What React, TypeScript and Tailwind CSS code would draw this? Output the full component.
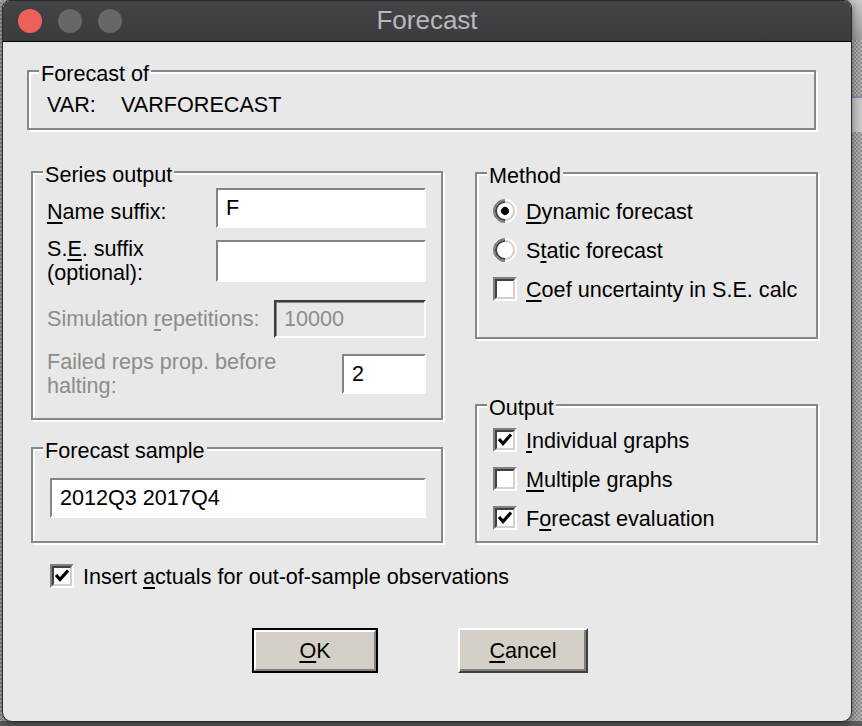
import React from 'react';

const FONT = { fontFamily: '"Liberation Sans", Arial, sans-serif' };

// etched group box with its caption sitting on the top edge
function GroupBox({ title, className, children }: { title: string; className?: string; children?: React.ReactNode }) {
  return (
    <div className={`relative border-2 border-[#878787] shadow-[inset_2px_2px_0_#fff,2px_2px_0_#fff] ${className ?? ''}`}>
      <span className="absolute left-[10px] top-[-10px] bg-[#e8e8e8] px-[2px] leading-[24px]">{title}</span>
      {children}
    </div>
  );
}

function Key({ children }: { children: React.ReactNode }) {
  return <span className="underline decoration-2 underline-offset-[3px]">{children}</span>;
}

function CheckBox({ checked }: { checked?: boolean }) {
  return (
    <div className="h-[24px] w-[24px] shrink-0 border-2 border-t-[#808080] border-l-[#808080] border-b-white border-r-white">
      <div className="flex h-full w-full items-center justify-center border-2 border-t-[#404040] border-l-[#404040] border-b-[#d4d0c8] border-r-[#d4d0c8] bg-white">
        {checked && (
          <svg width="16" height="16" viewBox="0 0 16 16">
            <path d="M2 7 L6 11.5 L14 2.5" stroke="#000" strokeWidth="3.2" fill="none" />
          </svg>
        )}
      </div>
    </div>
  );
}

function Radio({ checked }: { checked?: boolean }) {
  return (
    <div className="h-[24px] w-[24px] shrink-0 -rotate-45 rounded-full border-2 border-t-[#808080] border-l-[#808080] border-b-white border-r-white">
      <div className="flex h-full w-full items-center justify-center rounded-full border-2 border-t-[#404040] border-l-[#404040] border-b-[#d4d0c8] border-r-[#d4d0c8] bg-white">
        {checked && <div className="h-[8px] w-[8px] rounded-full bg-black" />}
      </div>
    </div>
  );
}

function TextBox({ value, className }: { value?: string; className?: string }) {
  return (
    <div className={`flex items-center border-2 border-t-[#858585] border-l-[#858585] border-b-white border-r-white bg-white pl-[8px] ${className ?? ''}`}>
      {value}
    </div>
  );
}

function Option({ control, children }: { control: React.ReactNode; children: React.ReactNode }) {
  return (
    <div className="flex h-[24px] items-center gap-[9px]">
      {control}
      <span className="pt-[1px] leading-[24px]">{children}</span>
    </div>
  );
}

export default function App() {
  return (
    <div
      className="relative h-[726px] w-[862px] overflow-hidden bg-[repeating-conic-gradient(#8e8e8e_0_25%,#b4b4b4_0_50%)] bg-[length:4px_4px] text-[21.6px] text-black"
      style={FONT}
    >
      {/* desktop bits peeking out behind the dialog */}
      <div className="absolute right-0 top-0 h-[40px] w-[12px] bg-gradient-to-b from-[#c9c9c9] to-[#9d9d9d]" />
      <div className="absolute right-0 top-[96px] h-[36px] w-[12px] border-t-2 border-[#8c8cb0] bg-[#c8c8c8]" />
      <div className="absolute bottom-0 left-0 h-[5px] w-full bg-[#5c5c5c]" />

      <div className="relative ml-[2px] flex h-[722px] w-[850px] flex-col overflow-hidden rounded-t-[8px] rounded-b-[10px] border border-[#2a2a2a] bg-[#e8e8e8] shadow-[0_2px_8px_rgba(0,0,0,0.5)]">
        {/* title bar */}
        <div className="relative flex h-[41px] shrink-0 items-center border-b border-black bg-gradient-to-b from-[#424448] to-[#3a3c3f]">
          <div className="ml-[15px] flex gap-[16px]">
            <div className="h-[24px] w-[24px] rounded-full bg-[#ec6159]" />
            <div className="h-[24px] w-[24px] rounded-full bg-[#66676a]" />
            <div className="h-[24px] w-[24px] rounded-full bg-[#66676a]" />
          </div>
          <div className="absolute inset-0 flex items-center justify-center pb-[1px] text-[26px] text-[#b9b9b9]">
            Forecast
          </div>
        </div>

        <div className="flex flex-col">
          <GroupBox title="Forecast of" className="ml-[24px] mt-[28px] h-[60px] w-[789px]">
            <div className="ml-[18px] mt-[21px] flex leading-[24px]">
              <span className="w-[74px]">VAR:</span>
              <span>VARFORECAST</span>
            </div>
          </GroupBox>

          <div className="mt-[41px] flex">
            {/* left column */}
            <div className="ml-[28px] flex w-[412px] flex-col">
              <GroupBox title="Series output" className="h-[249px]">
                <div className="flex flex-col pl-[14px] pr-[15px] pt-[15px]">
                  <div className="flex h-[40px] items-center justify-between">
                    <span className="pt-[8px] leading-[24px]">
                      <Key>N</Key>ame suffix:
                    </span>
                    <TextBox value="F" className="h-[40px] w-[210px]" />
                  </div>
                  <div className="mt-[12px] flex h-[42px] items-center justify-between">
                    <span className="leading-[24px]">
                      S.<Key>E</Key>. suffix
                      <br />
                      (optional):
                    </span>
                    <TextBox className="h-[42px] w-[210px]" />
                  </div>
                  <div className="mt-[18px] flex h-[38px] items-center justify-between text-[#8c8c8c]">
                    <span className="leading-[24px]">
                      Simulation <Key>r</Key>epetitions:
                    </span>
                    <div className="flex h-[38px] w-[152px] items-center border-2 border-t-[#3c3c3c] border-l-[#3c3c3c] border-b-white border-r-white bg-[#e8e8e8] pl-[8px] shadow-[inset_1px_1px_0_#8a8a8a]">
                      10000
                    </div>
                  </div>
                  <div className="mt-[16px] flex h-[40px] items-center justify-between">
                    <span className="leading-[24px] text-[#8c8c8c]">
                      Failed reps prop. before
                      <br />
                      halting:
                    </span>
                    <TextBox value="2" className="h-[40px] w-[84px]" />
                  </div>
                </div>
              </GroupBox>

              <GroupBox title="Forecast sample" className="mt-[27px] h-[96px]">
                <div className="pl-[17px] pr-[15px] pt-[29px]">
                  <TextBox value="2012Q3 2017Q4" className="h-[40px] w-full" />
                </div>
              </GroupBox>
            </div>

            {/* right column */}
            <div className="ml-[32px] flex w-[343px] flex-col">
              <GroupBox title="Method" className="mt-[1px] h-[167px]">
                <div className="flex flex-col gap-[15px] pl-[16px] pt-[25px]">
                  <Option control={<Radio checked />}>
                    <Key>D</Key>ynamic forecast
                  </Option>
                  <Option control={<Radio />}>
                    S<Key>t</Key>atic forecast
                  </Option>
                  <Option control={<CheckBox />}>
                    <Key>C</Key>oef uncertainty in S.E. calc
                  </Option>
                </div>
              </GroupBox>

              <GroupBox title="Output" className="mt-[65px] h-[139px]">
                <div className="flex flex-col gap-[15px] pl-[16px] pt-[22px]">
                  <Option control={<CheckBox checked />}>
                    <Key>I</Key>ndividual graphs
                  </Option>
                  <Option control={<CheckBox />}>
                    <Key>M</Key>ultiple graphs
                  </Option>
                  <Option control={<CheckBox checked />}>
                    F<Key>o</Key>recast evaluation
                  </Option>
                </div>
              </GroupBox>
            </div>
          </div>

          <div className="ml-[47px] mt-[21px]">
            <Option control={<CheckBox checked />}>
              Insert <Key>a</Key>ctuals for out-of-sample observations
            </Option>
          </div>

          <div className="mt-[40px] flex">
            <button className="ml-[249px] h-[45px] w-[126px] border-2 border-black bg-[#d4d0c8]">
              <div className="flex h-full w-full items-center justify-center border-2 border-t-white border-l-white border-b-[#808080] border-r-[#808080] pt-[2px]">
                <Key>O</Key>K
              </div>
            </button>
            <button className="ml-[80px] flex h-[45px] w-[130px] items-center justify-center border-2 border-t-white border-l-white border-b-[#404040] border-r-[#404040] bg-[#d4d0c8] pt-[2px] shadow-[inset_-2px_-2px_0_#808080]">
              <span>
                <Key>C</Key>ancel
              </span>
            </button>
          </div>
        </div>
      </div>
    </div>
  );
}
